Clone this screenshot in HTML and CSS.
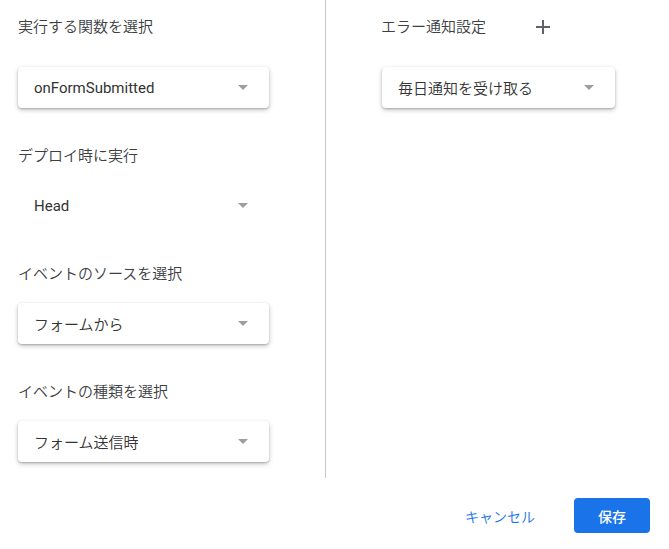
FILE: index.html
```html
<!DOCTYPE html>
<html lang="ja">
<head>
<meta charset="utf-8">
<link rel="stylesheet" href="styles.css">
</head>
<body>
<div class="dialog">
  <div class="columns">
    <div class="col left">
      <div class="label first">実行する関数を選択</div>
      <div class="select first-select"><span class="val">onFormSubmitted</span><span class="arrow"></span></div>
      <div class="label">デプロイ時に実行</div>
      <div class="select flat"><span class="val">Head</span><span class="arrow"></span></div>
      <div class="label">イベントのソースを選択</div>
      <div class="select"><span class="val ja">フォームから</span><span class="arrow"></span></div>
      <div class="label">イベントの種類を選択</div>
      <div class="select"><span class="val ja">フォーム送信時</span><span class="arrow"></span></div>
    </div>
    <div class="col right">
      <div class="label first row">
        <span>エラー通知設定</span>
        <svg class="plus" width="14" height="14" viewBox="0 0 14 14"><path d="M7 0v14M0 7h14" stroke="#5f6368" stroke-width="2"/></svg>
      </div>
      <div class="select first-select narrow"><span class="val ja">毎日通知を受け取る</span><span class="arrow"></span></div>
    </div>
  </div>
  <div class="actions">
    <button class="btn text">キャンセル</button>
    <button class="btn primary">保存</button>
  </div>
</div>
</body>
</html>
```
FILE: styles.css
```css
html, body {
  margin: 0;
  padding: 0;
  background: #fff;
}
body {
  font-family: Roboto, "Noto Sans CJK JP", sans-serif;
  font-size: 15px;
  color: #3c4043;
}
.dialog {
  width: 669px;
  height: 549px;
  display: flex;
  flex-direction: column;
}
.columns {
  display: flex;
  height: 478px;
}
.col {
  display: flex;
  flex-direction: column;
}
.left {
  width: 326px;
  box-sizing: border-box;
  padding-left: 18px;
  border-right: 1px solid #c8c8c8;
}
.right {
  padding-left: 55px;
}
.label {
  height: 20px;
  line-height: 20px;
  margin-top: 37px;
  color: #3c4043;
  white-space: nowrap;
  font-family: "Noto Sans CJK JP", sans-serif;
  font-weight: 350;
}
.label.first {
  margin-top: 16px;
}
.label.row {
  display: flex;
  align-items: center;
  gap: 50px;
}
.plus {
  margin-top: 2px;
}
.select {
  margin-top: 20px;
  width: 251px;
  height: 41px;
  box-sizing: border-box;
  border-radius: 4px;
  background: #fff;
  box-shadow: 0 1px 2px rgba(0,0,0,.2), 0 2px 5px rgba(0,0,0,.22);
  display: flex;
  align-items: center;
  justify-content: space-between;
  padding: 0 21px 0 16px;
  color: #333;
}
.select.first-select {
  margin-top: 31px;
}
.select.flat {
  box-shadow: none;
  background: transparent;
}
.select.narrow {
  width: 233px;
  margin-left: 1px;
}
.val {
  white-space: nowrap;
}
.val.ja {
  font-family: "Noto Sans CJK JP", sans-serif;
  font-weight: 350;
}
.arrow {
  width: 0;
  height: 0;
  border-left: 5px solid transparent;
  border-right: 5px solid transparent;
  border-top: 5px solid #9e9e9e;
}
.actions {
  display: flex;
  justify-content: flex-end;
  align-items: center;
  padding: 20px 19px 0 0;
  gap: 31px;
}
.btn {
  font-family: "Noto Sans CJK JP", sans-serif;
  font-size: 14px;
  border: none;
  cursor: pointer;
  height: 35px;
  border-radius: 4px;
}
.btn.text {
  background: transparent;
  color: #1a73e8;
  padding: 0 8px;
  font-weight: 350;
}
.btn.primary {
  background: #1a73e8;
  color: #fff;
  width: 76px;
  font-weight: 500;
}
```
